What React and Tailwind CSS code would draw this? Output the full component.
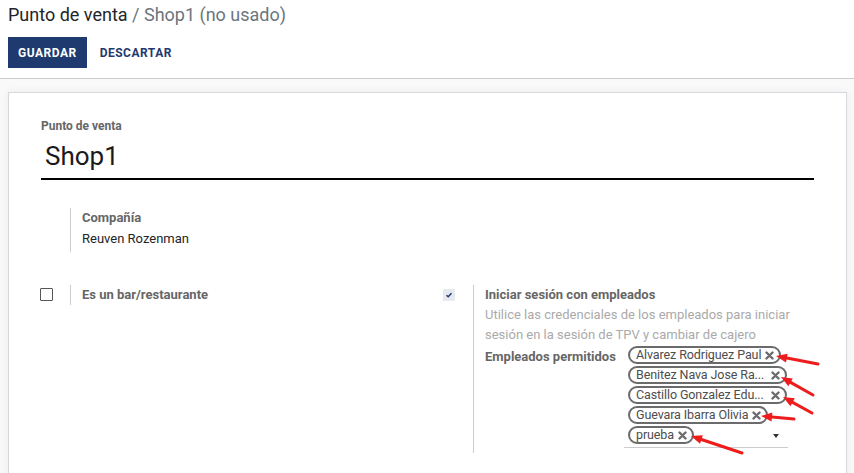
import React from "react";

const tags = [
  "Alvarez Rodriguez Paul",
  "Benitez Nava Jose Ra...",
  "Castillo Gonzalez Edu...",
  "Guevara Ibarra Olivia",
  "prueba",
];

// red annotation arrows drawn on top of the screenshot: [tipX, tipY, tailX, tailY]
const arrows = [
  [776, 356, 818, 364],
  [781, 377, 813, 395],
  [783, 397, 812, 413],
  [761, 416, 794, 419],
  [691, 436, 742, 453],
];

function Arrow({ a }) {
  const [x1, y1, x2, y2] = a;
  const ang = Math.atan2(y2 - y1, x2 - x1);
  const len = 11;
  const w = 4.5;
  const bx = x1 + Math.cos(ang) * len;
  const by = y1 + Math.sin(ang) * len;
  const px = -Math.sin(ang) * w;
  const py = Math.cos(ang) * w;
  return (
    <g>
      <line x1={bx} y1={by} x2={x2} y2={y2} stroke="#ee1c1c" strokeWidth="3" strokeLinecap="round" />
      <polygon points={`${x1},${y1} ${bx + px},${by + py} ${bx - px},${by - py}`} fill="#ee1c1c" />
    </g>
  );
}

function Tag({ name }) {
  const cut = name.endsWith("...");
  return (
    <div className="inline-flex items-center h-[18px] border-2 border-[#6b6b6b] rounded-full pl-[6px] pr-[5px] text-[12.5px] leading-none text-[#4d4d4d]">
      <span className="whitespace-nowrap tracking-[-0.1px]">{name}</span>
      <svg width="9" height="9" viewBox="0 0 9 9" className={cut ? "ml-[7px] shrink-0" : "ml-[4px] shrink-0"}>
        <path d="M1.5 1.5 L7.5 7.5 M7.5 1.5 L1.5 7.5" stroke="#6b6b6b" strokeWidth="2.4" strokeLinecap="round" />
      </svg>
    </div>
  );
}

export default function App() {
  return (
    <div className="relative h-[473px] overflow-hidden bg-white font-['Roboto',sans-serif] text-[13px] text-[#212529]">
      {/* Control panel */}
      <div className="px-2 pt-1 pb-[10px] border-b border-[#cccccc]">
        <div className="text-[18px] leading-[22px]">
          <span className="text-[#212529]">Punto de venta</span>
          <span className="text-[#6c757d]"> / Shop1 (no usado)</span>
        </div>
        <div className="flex items-center mt-[11px]">
          <button className="h-[31px] px-[10px] bg-[#1f3a6e] text-white text-[12px] font-bold tracking-[0.5px]">
            GUARDAR
          </button>
          <button className="h-[31px] px-[12px] ml-px text-[#1f3a6e] text-[12px] font-bold tracking-[0.5px]">
            DESCARTAR
          </button>
        </div>
      </div>

      {/* Form */}
      <div className="bg-[#f9f9f9] pt-[13px] pl-2 pr-[7px] h-full">
        <div className="bg-white border border-[#d5d8dc] shadow-[0_0_8px_rgba(0,0,0,0.06)] px-8 pt-[26px] h-full">
          <div className="text-[12px] leading-[15px] font-bold text-[#666]">Punto de venta</div>
          <div className="mt-[7px] pl-1 pb-[6px] text-[26px] leading-[31px] text-[#1a1a1a] border-b-2 border-black">
            Shop1
          </div>

          <div className="mt-[28px] ml-[29px] border-l border-[#cccccc] pl-[11px] pb-[3px] leading-[20px]">
            <div className="font-bold text-[#666]">Compañía</div>
            <div className="mt-px">Reuven Rozenman</div>
          </div>

          <div className="mt-[33px] grid grid-cols-[402px_1fr]">
            {/* Left setting */}
            <div className="flex items-start">
              <div className="w-[30px] pt-[3px] -ml-px">
                <div className="w-[13px] h-[13px] border-[1.5px] border-[#555] rounded-[1px]" />
              </div>
              <div className="border-l border-[#cccccc] pl-[11px] leading-[20px] font-bold text-[#666]">
                Es un bar/restaurante
              </div>
            </div>

            {/* Right setting */}
            <div className="flex items-start">
              <div className="w-[30px] pt-[4px]">
                <div className="w-[12px] h-[12px] bg-[#e6e9ed] rounded-[1px] flex items-center justify-center">
                  <svg width="8" height="8" viewBox="0 0 8 8">
                    <path d="M1.5 4.2 L3.2 5.8 L6.5 2.2" stroke="#1f3a6e" strokeWidth="1.5" fill="none" />
                  </svg>
                </div>
              </div>
              <div className="border-l border-[#cccccc] pl-[11px] pb-[5px]">
                <div className="leading-[20px] font-bold text-[#666]">Iniciar sesión con empleados</div>
                <div className="w-[320px] leading-[19.5px] text-[#aaaaaa]">
                  Utilice las credenciales de los empleados para iniciar sesión en la sesión de TPV y cambiar de cajero
                </div>
                <div className="flex items-start mt-[2px]">
                  <div className="w-[139px] shrink-0 font-bold text-[#666] leading-[20px] pt-px">
                    Empleados permitidos
                  </div>
                  <div className="relative w-[164px] px-1 pb-[3px] border-b border-[#cccccc] flex flex-col items-start gap-[2px]">
                    {tags.map((t) => (
                      <Tag key={t} name={t} />
                    ))}
                    <div className="absolute right-[9px] bottom-[9px] w-0 h-0 border-l-[3px] border-r-[3px] border-t-[4px] border-l-transparent border-r-transparent border-t-[#333]" />
                  </div>
                </div>
              </div>
            </div>
          </div>
        </div>
      </div>

      <svg className="absolute inset-0 pointer-events-none" width="854" height="473">
        {arrows.map((a, i) => (
          <Arrow key={i} a={a} />
        ))}
      </svg>
    </div>
  );
}
